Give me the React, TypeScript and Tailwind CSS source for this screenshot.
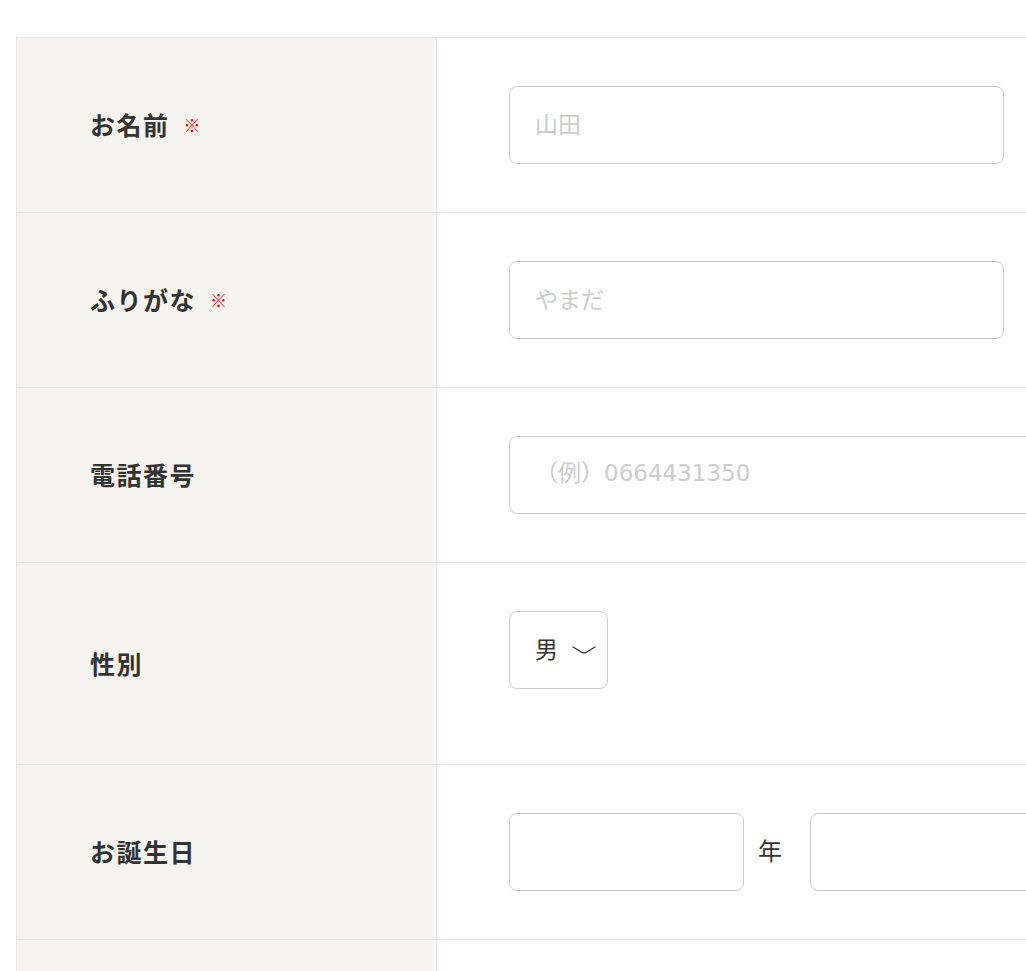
import React from 'react';

const font = { fontFamily: '"Noto Sans CJK JP", "Noto Sans", sans-serif' };
const latinFont = { fontFamily: '"DejaVu Sans", "Noto Sans CJK JP", sans-serif' };

const Required = () => (
  <span className="ml-[14px] text-[17px] font-normal text-[#e60012]">※</span>
);

interface RowProps {
  label: string;
  required?: boolean;
  tall?: boolean;
  children: React.ReactNode;
}

const Row: React.FC<RowProps> = ({ label, required, tall, children }) => (
  <div className="flex border-b border-[#e5e5e5]">
    <div className="flex w-[421px] shrink-0 items-center border-x border-[#e5e5e5] bg-[#f5f4ef] pl-[73px]">
      <span className="text-[25px] font-bold tracking-[0.06em] text-[#333]">{label}</span>
      {required && <Required />}
    </div>
    <div className={`flex-1 pl-[72px] pt-[48px] ${tall ? 'pb-[75px]' : 'pb-[48px]'}`}>{children}</div>
  </div>
);

const inputCls =
  'h-[78px] rounded-[8px] border border-[#cccccc] bg-white px-[25px] pb-[5px] text-[23px] text-[#333] placeholder:text-[#cccccc] outline-none';

export default function App() {
  return (
    <div className="h-screen w-full overflow-hidden bg-white" style={font}>
      <div className="ml-[16px] mt-[37px] w-[1200px] border-t border-[#e5e5e5]">
        <Row label="お名前" required>
          <input className={`${inputCls} w-[495px]`} placeholder="山田" />
        </Row>
        <Row label="ふりがな" required>
          <input className={`${inputCls} w-[495px]`} placeholder="やまだ" />
        </Row>
        <Row label="電話番号">
          <input className={`${inputCls} w-[620px]`} style={latinFont} placeholder="（例）0664431350" />
        </Row>
        <Row label="性別" tall>
          <div className="flex h-[78px] w-[99px] items-center rounded-[8px] border border-[#cccccc] bg-white pb-[4px] pl-[25px] text-[23px] text-[#333]">
            <span>男</span>
            <svg className="ml-[14px] mt-[4px]" width="24" height="10" viewBox="0 0 24 10" fill="none">
              <path d="M1 2 L10 7.5 Q12 8.6 14 7.5 L23 2" stroke="#333" strokeWidth="1.3" strokeLinecap="round" />
            </svg>
          </div>
        </Row>
        <Row label="お誕生日">
          <div className="flex items-center">
            <input className={`${inputCls} w-[235px]`} />
            <span className="mb-[4px] ml-[14px] mr-[28px] text-[24px] text-[#333]">年</span>
            <input className={`${inputCls} w-[235px]`} />
          </div>
        </Row>
        <Row label="">
          <div className="h-[78px]" />
        </Row>
      </div>
    </div>
  );
}
